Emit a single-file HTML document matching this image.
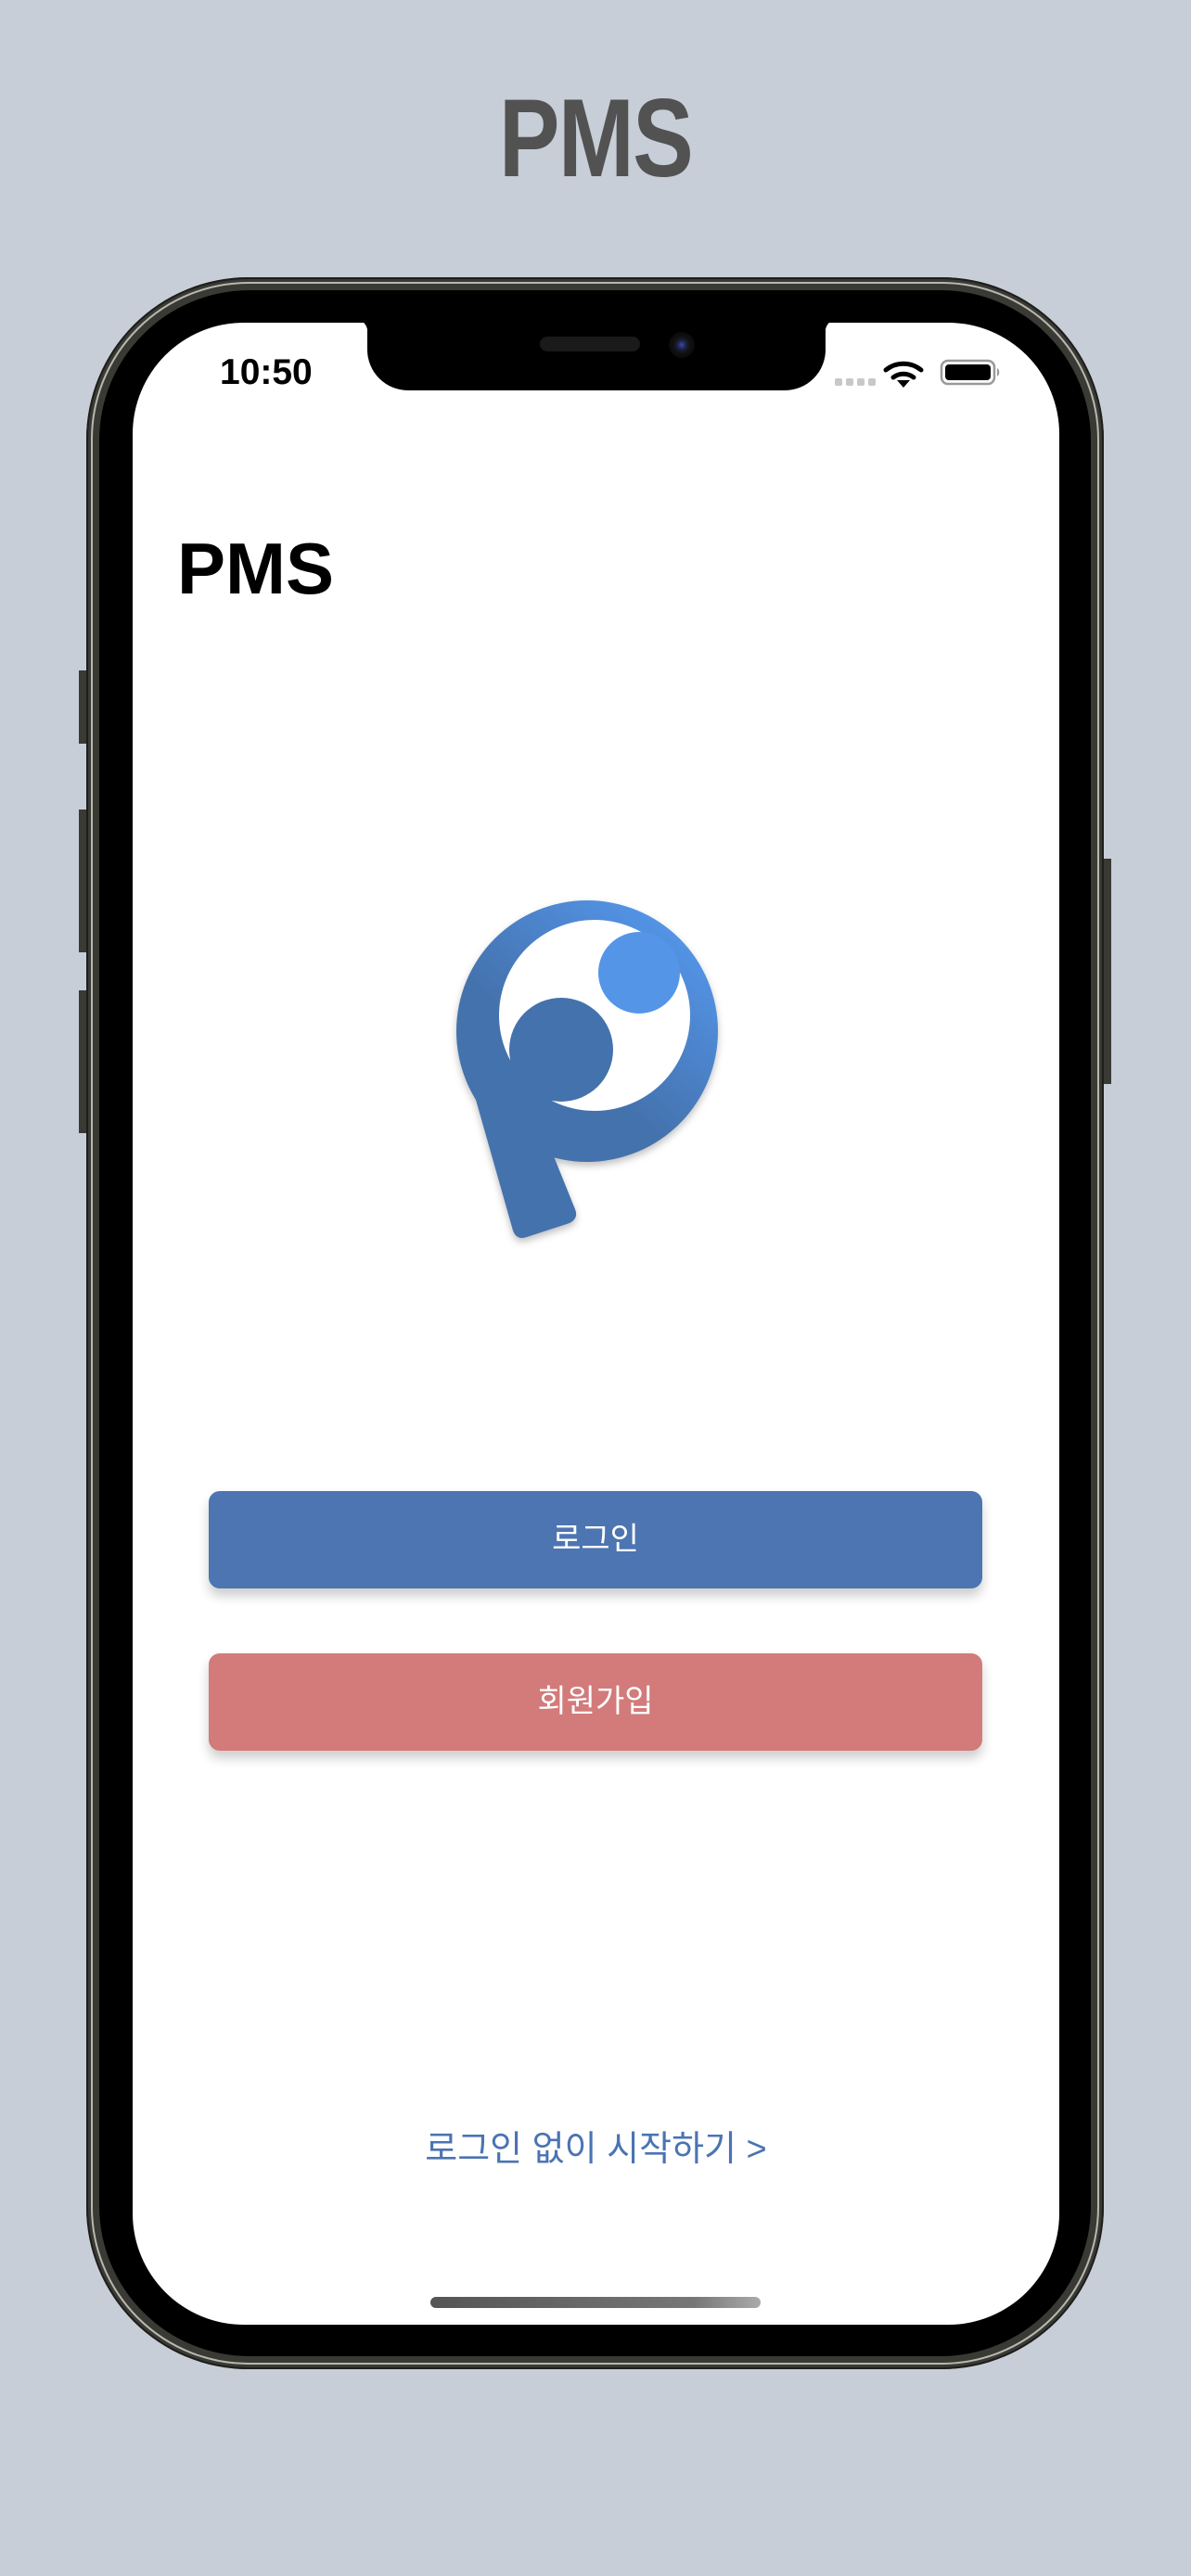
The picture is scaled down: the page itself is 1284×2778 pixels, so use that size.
<!DOCTYPE html>
<html><head><meta charset="utf-8"><style>
html,body{margin:0;padding:0}
body{width:1284px;height:2778px;background:#c7ced7;position:relative;overflow:hidden;font-family:"Liberation Sans","Noto Sans CJK KR",sans-serif}
.title{position:absolute;left:0;width:1284px;top:84px;text-align:center;font-size:120px;font-weight:bold;color:#525252;letter-spacing:-2px;transform:scaleX(0.82);line-height:130px}
.phone{position:absolute;left:93px;top:299px;width:1097px;height:2256px;border-radius:175px;background:#3a3a35;box-shadow:inset 0 0 0 2px #1e1e1c}
.rim{position:absolute;left:5px;top:5px;right:5px;bottom:5px;border-radius:170px;border:2px solid #b8b8b0;}
.bezel{position:absolute;left:14px;top:14px;right:14px;bottom:14px;border-radius:162px;background:#000}
.screen{position:absolute;left:50px;top:49px;width:999px;height:2159px;border-radius:120px;background:#fff;overflow:hidden}
.notch{position:absolute;left:253px;top:-4px;width:494px;height:77px;background:#000;border-radius:0 0 44px 44px}
.notch:before{content:"";position:absolute;left:-14px;top:0;width:14px;height:14px;background:radial-gradient(circle at 0 100%,transparent 14px,#000 14.5px)}
.notch:after{content:"";position:absolute;right:-14px;top:0;width:14px;height:14px;background:radial-gradient(circle at 100% 100%,transparent 14px,#000 14.5px)}
.spk{position:absolute;left:186px;top:19px;width:108px;height:16px;border-radius:8px;background:#1a1a1a}
.cam{position:absolute;left:325px;top:14px;width:28px;height:28px;border-radius:50%;background:radial-gradient(circle,#3a4aa0 0,#1a2040 5px,#111 9px,#0a0a0a 14px)}
.time{position:absolute;left:94px;top:32px;font-size:39px;font-weight:bold;color:#000}
.h{position:absolute;left:48px;top:220px;font-size:78px;font-weight:bold;color:#000}
.btn{position:absolute;left:82px;width:834px;height:105px;border-radius:12px;color:#fff;font-size:34px;text-align:center;line-height:105px;box-shadow:0 8px 12px rgba(0,0,0,.2)}
.link{position:absolute;left:0;width:999px;text-align:center;top:1938px;font-size:38px;color:#4a74b3}
.home{position:absolute;left:321px;top:2129px;width:356px;height:12px;border-radius:6px;background:linear-gradient(90deg,#555,#777 80%,#aaa)}
.sb{position:absolute;background:#3a3a35;width:9px}
</style></head><body>
<div class="title">PMS</div>
<div class="sb" style="left:85px;top:723px;height:79px"></div>
<div class="sb" style="left:85px;top:873px;height:154px"></div>
<div class="sb" style="left:85px;top:1068px;height:154px"></div>
<div class="sb" style="left:1189px;top:926px;height:243px"></div>
<div class="phone"><div class="rim"></div><div class="bezel"></div>
<div class="screen">
<div class="notch"><div class="spk"></div><div class="cam"></div></div>
<div class="time">10:50</div>
<svg style="position:absolute;left:0;top:0" width="999" height="120">
<g fill="#c8c8c8"><rect x="757" y="60" width="8" height="8" rx="2"/><rect x="769" y="60" width="8" height="8" rx="2"/><rect x="781" y="60" width="8" height="8" rx="2"/><rect x="793" y="60" width="8" height="8" rx="2"/></g>
<g fill="none" stroke="#000" stroke-width="5" stroke-linecap="round"><path d="M812 51 A30 30 0 0 1 850 51"/><path d="M820 59 A18 18 0 0 1 842 59"/></g>
<path d="M824 62 L838 62 L831 70 Z" fill="#000"/>
<rect x="872" y="41" width="57" height="25" rx="7" fill="none" stroke="#999" stroke-width="2.5"/>
<rect x="876" y="45" width="49" height="17" rx="4" fill="#000"/>
<path d="M932 49 a4 5 0 0 1 0 9z" fill="#999"/>
</svg>
<div class="h">PMS</div>
<svg style="position:absolute;left:-143px;top:-346px;filter:drop-shadow(0 4px 4px rgba(0,0,0,.25))" width="1284" height="1500">
<defs><linearGradient id="g" x1="0.2" y1="0.9" x2="0.85" y2="0.1"><stop offset="0.35" stop-color="#4472ad"/><stop offset="1" stop-color="#5495e8"/></linearGradient></defs>
<path d="M492 1110 L553 1325 Q557 1336 568 1332 L614 1317 Q624 1312 620 1302 L597 1245 L633 1110 Z" fill="#4472ad"/>
<circle cx="633" cy="1110" r="141" fill="url(#g)"/>
<circle cx="641" cy="1093" r="103" fill="#fff"/>
<circle cx="605" cy="1130" r="56" fill="#4472ac"/>
<circle cx="689" cy="1047" r="44" fill="#5495e8"/>
</svg>
<div class="btn" style="top:1260px;background:#4c75b2">로그인</div>
<div class="btn" style="top:1435px;background:#d27b7a">회원가입</div>
<div class="link">로그인 없이 시작하기 &gt;</div>
<div class="home"></div>
</div></div>
</body></html>
